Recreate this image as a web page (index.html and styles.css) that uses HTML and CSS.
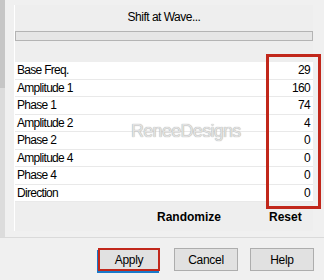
FILE: index.html
```html
<!DOCTYPE html>
<html lang="en">
<head>
  <meta charset="UTF-8" />
  <title>Shift at Wave</title>
  <link rel="stylesheet" href="styles.css">
</head>
<body>
  <div class="dialog">
    <div class="main">
      <div class="scrollbar"><div class="thumb"></div></div>

      <div class="panel">
        <div class="title">Shift at Wave...</div>
        <div class="progress"></div>

        <!-- Parameter list -->
        <div class="params">
          <div class="row"><span>Base Freq.</span><span>29</span></div>
          <div class="row"><span>Amplitude 1</span><span>160</span></div>
          <div class="row"><span>Phase 1</span><span>74</span></div>
          <div class="row"><span>Amplitude 2</span><span>4</span></div>
          <div class="row"><span>Phase 2</span><span>0</span></div>
          <div class="row"><span>Amplitude 4</span><span>0</span></div>
          <div class="row"><span>Phase 4</span><span>0</span></div>
          <div class="row"><span>Direction</span><span>0</span></div>
        </div>

        <div class="actions">
          <span class="randomize">Randomize</span>
          <span class="reset">Reset</span>
        </div>

        <div class="watermark">ReneeDesigns</div>
      </div>
    </div>

    <div class="footer">
      <button class="btn apply">Apply</button>
      <button class="btn">Cancel</button>
      <button class="btn">Help</button>
    </div>

    <div class="highlight"></div>
  </div>
</body>
</html>
```

FILE: styles.css
```css
body {
  margin: 0;
  background: #f0f0f0;
  font-family: 'Liberation Sans', Arial, sans-serif;
  font-size: 12px;
  color: #000;
}

.dialog {
  position: relative;
  width: 324px;
  height: 280px;
  overflow: hidden;
}

.main {
  display: flex;
  height: 237px;
  border-bottom: 1px solid #dadada;
}

.scrollbar {
  width: 5px;
  background: #dcdcdc;
}

.thumb {
  height: 88px;
  background: #c6c6c6;
}

.panel {
  position: relative;
  margin: 5px 0 6px 9px;
  width: 298px;
  background: #eeeeee;
  border-left: 1px solid #fff;
  display: flex;
  flex-direction: column;
}

.panel > * {
  flex-shrink: 0;
}

.title {
  height: 25px;
  line-height: 25px;
  text-align: center;
  letter-spacing: -0.5px;
}

.progress {
  height: 8px;
  margin-top: 1px;
  background: #e6e6e6;
  border: 1px solid #b4b4b4;
}

.params {
  margin-top: 21px;
  background: #fff;
}

.row {
  display: flex;
  justify-content: space-between;
  height: 16.5px;
  line-height: 17px;
  padding: 0 3px 0 2px;
  border-bottom: 1px solid #e9e9e9;
  letter-spacing: -0.7px;
}

.actions {
  display: flex;
  height: 28px;
  line-height: 30px;
  font-weight: bold;
}

.randomize {
  margin-left: 142px;
}

.reset {
  margin-left: 48px;
}

.watermark {
  position: absolute;
  left: 116px;
  top: 116px;
  font-family: 'Liberation Sans', sans-serif;
  font-size: 18px;
  letter-spacing: -0.7px;
  color: #e2e2e2;
  text-shadow: 0 0 1px #8c8c8c;
}

.footer {
  display: flex;
  justify-content: flex-end;
  gap: 12px;
  padding: 10px 10px 0 0;
}

.btn {
  width: 64px;
  height: 23px;
  background: #e1e1e1;
  border: 1px solid #adadad;
  font-family: 'Liberation Sans', Arial, sans-serif;
  font-size: 12px;
  letter-spacing: -0.3px;
  padding: 0;
}

.btn.apply {
  width: 62px;
  margin-right: 2px;
  border: 2px solid #c1271b;
  box-shadow: -1px 2px 0 #1979ca;
}

.highlight {
  position: absolute;
  left: 266px;
  top: 54px;
  width: 49px;
  height: 149px;
  border: 3px solid #c1271b;
}
```
